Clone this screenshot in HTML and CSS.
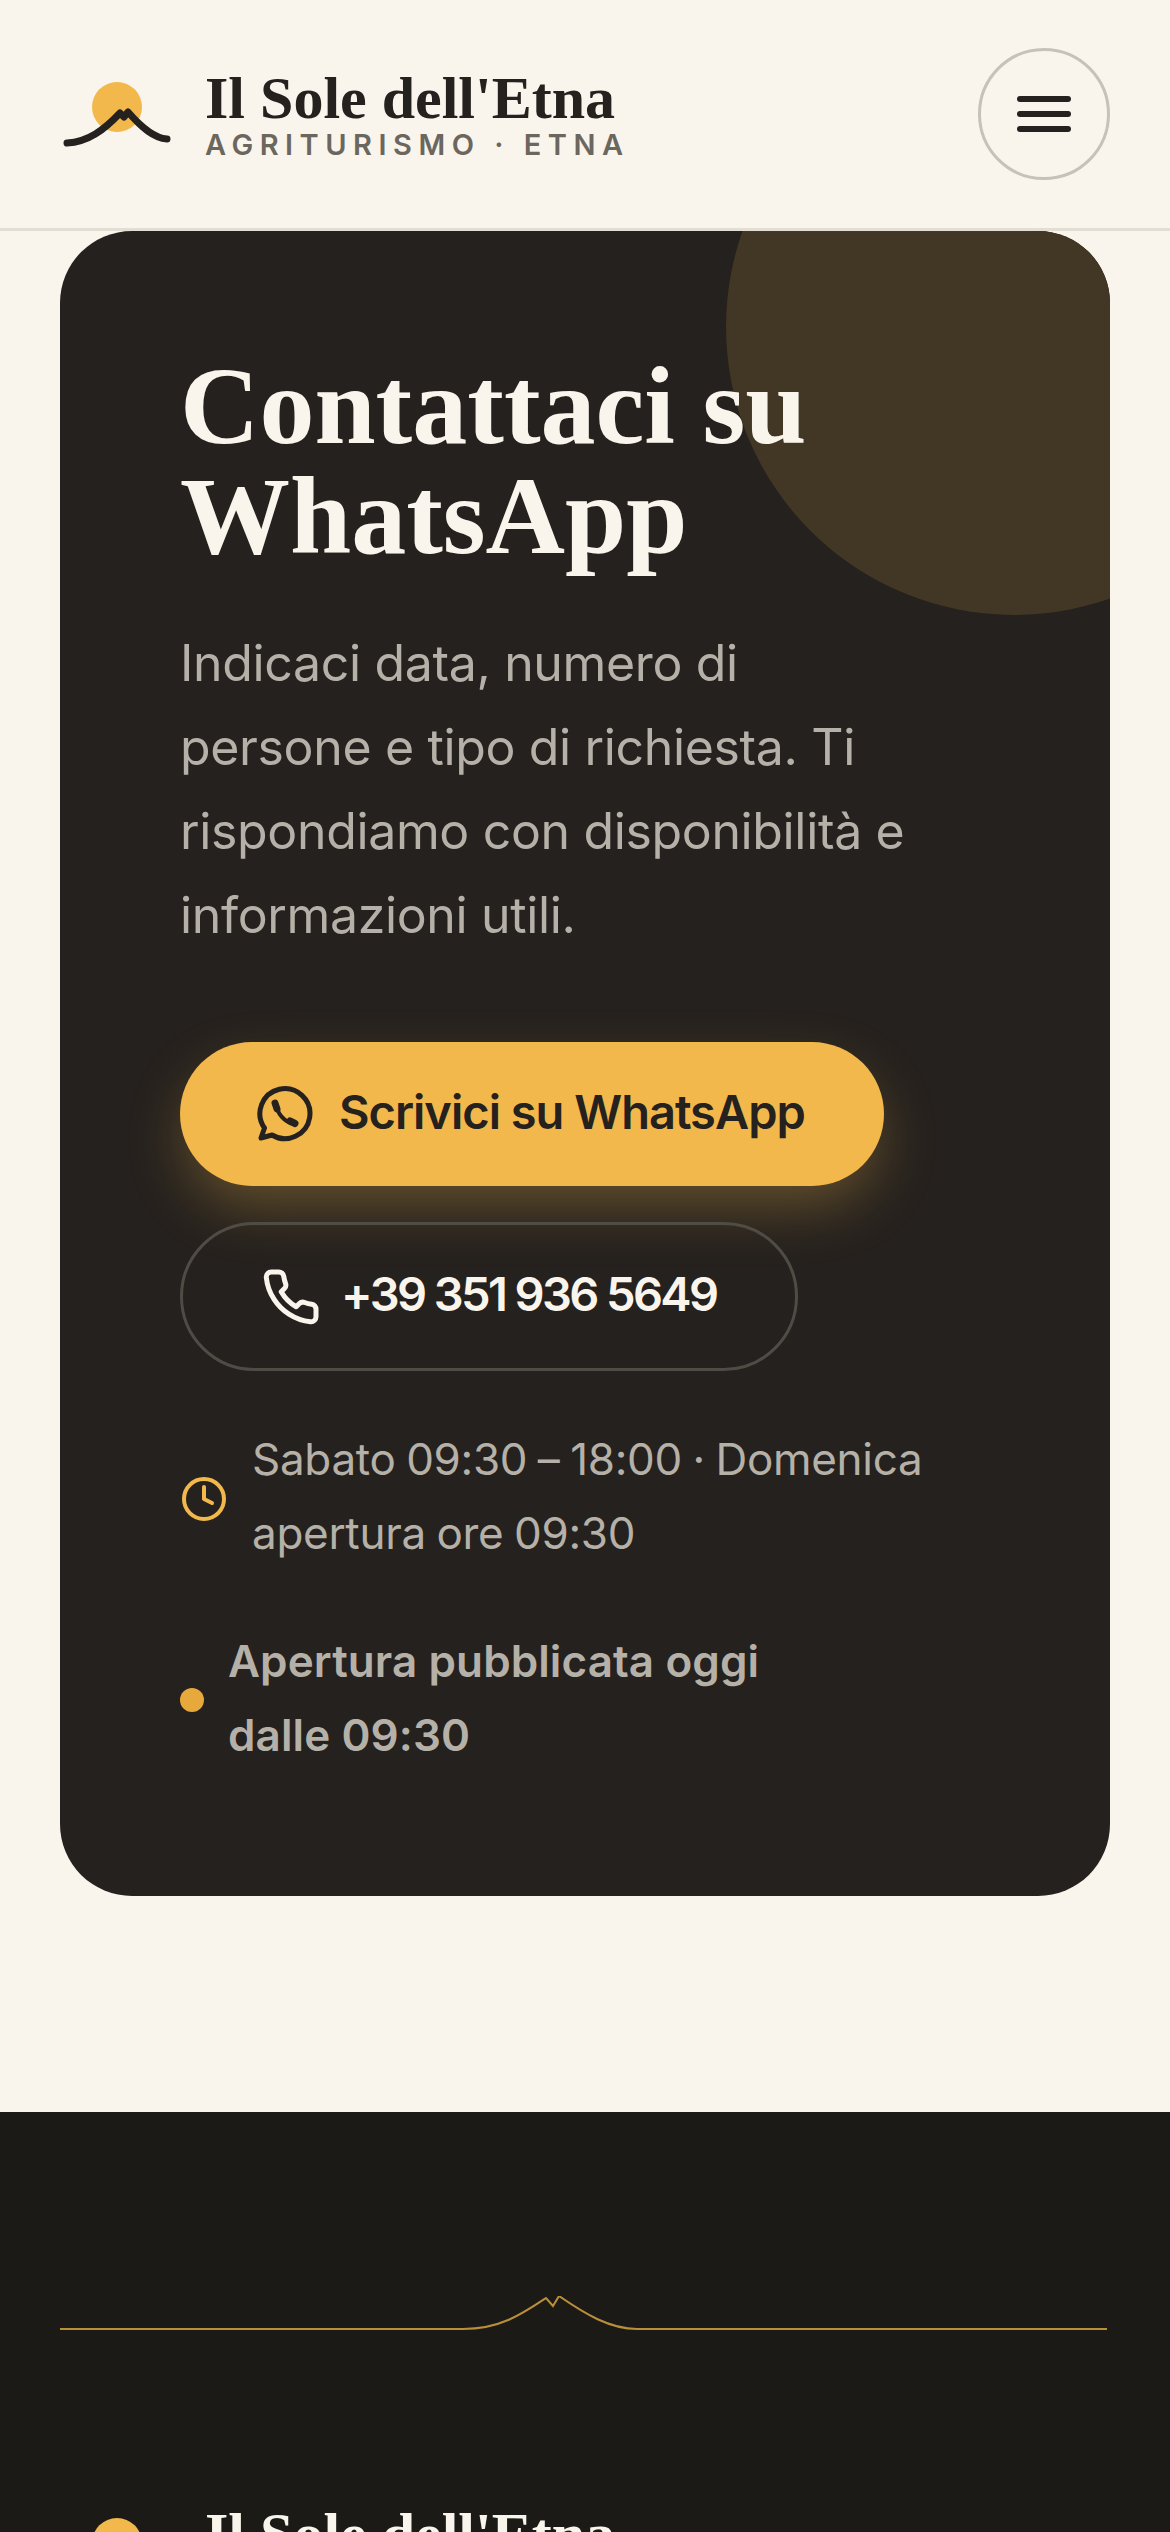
FILE: index.html
```html
<!DOCTYPE html>
<html lang="it">
<head>
<meta charset="utf-8">
<title>Il Sole dell'Etna</title>
<link rel="stylesheet" href="styles.css">
</head>
<body>
<header class="header">
  <a class="brand">
    <svg class="brand-mark" viewBox="0 0 120 72">
      <circle class="sun" cx="57" cy="31" r="25"/>
      <path class="ridge" d="M7 67 C28 66 44 54 60 37 L64 41 L68 36 C82 52 94 62 107 63"/>
    </svg>
    <span class="brand-text">
      <span class="brand-name">Il Sole dell'Etna</span>
      <span class="brand-sub">AGRITURISMO · ETNA</span>
    </span>
  </a>
  <button class="menu" aria-label="Menu"><span></span><span></span><span></span></button>
</header>
<main class="main">
  <section class="card">
    <div class="card-circle"></div>
    <h2 class="card-title">Contattaci su WhatsApp</h2>
    <p class="card-lead">Indicaci data, numero di persone e tipo di richiesta. Ti rispondiamo con disponibilità e informazioni utili.</p>
    <div class="actions">
      <a class="btn btn-primary">
        <svg class="btn-icon" viewBox="0 0 60 60">
          <path class="wa-outline" d="M6 54 L9.500 44 A25 25 0 1 1 17 51 Z"/>
          <path class="wa-phone" d="M21 20 C22 29 29 38 39 40"/>
          <path class="wa-cap" d="M20 19 L22 25 M35 37 L40 39.500"/>
        </svg>
        <span class="btn-label">Scrivici su WhatsApp</span>
      </a>
      <a class="btn btn-ghost">
        <svg class="btn-icon" viewBox="0 0 24 24">
          <path class="line-icon" d="M22 16.920v3a2 2 0 0 1-2.180 2 19.790 19.790 0 0 1-8.630-3.070 19.500 19.500 0 0 1-6-6 19.790 19.790 0 0 1-3.070-8.670A2 2 0 0 1 4.110 2h3a2 2 0 0 1 2 1.720 12.840 12.840 0 0 0 .7 2.810 2 2 0 0 1-.45 2.110L8.090 9.910a16 16 0 0 0 6 6l1.270-1.270a2 2 0 0 1 2.110-.45 12.840 12.840 0 0 0 2.810.7A2 2 0 0 1 22 16.920z"/>
        </svg>
        <span class="btn-label">+39 351 936 5649</span>
      </a>
    </div>
    <div class="info-row">
      <svg class="clock" viewBox="0 0 24 24">
        <circle class="line-icon" cx="12" cy="12" r="10"/>
        <path class="line-icon" d="M12 6v6l4 2"/>
      </svg>
      <span class="info-text">Sabato 09:30 – 18:00 · Domenica apertura ore 09:30</span>
    </div>
    <div class="status-row">
      <span class="dot"></span>
      <span class="status-text">Apertura pubblicata oggi dalle 09:30</span>
    </div>
  </section>
</main>
<footer class="footer">
  <svg class="divider" viewBox="0 0 1047 36">
    <path d="M0 33 H403 C440 33 462 18 486 2 L493 10 L499 0 C525 18 550 33 577 33 H1047"/>
  </svg>
  <a class="brand brand-footer">
    <svg class="brand-mark" viewBox="0 0 120 72">
      <circle class="sun" cx="57" cy="31" r="25"/>
      <path class="ridge" d="M7 67 C28 66 44 54 60 37 L64 41 L68 36 C82 52 94 62 107 63"/>
    </svg>
    <span class="brand-text">
      <span class="brand-name">Il Sole dell'Etna</span>
      <span class="brand-sub">AGRITURISMO · ETNA</span>
    </span>
  </a>
</footer>
</body>
</html>
```
FILE: styles.css
```css
* { box-sizing: border-box; }
html, body { margin: 0; height: 2532px; overflow: hidden; }
body { background: #f9f5ec; font-family: Inter, "Liberation Sans", sans-serif; color: #25211e; }

.header {
  height: 231px;
  padding: 48px 60px 0;
  display: flex;
  justify-content: space-between;
  align-items: flex-start;
  border-bottom: 3px solid #e2ded4;
}
.brand { display: flex; align-items: flex-start; gap: 25px; padding-top: 18px; }
.brand-mark { width: 120px; height: 72px; margin-top: 10px; flex: none; }
.sun { fill: #f2b84b; }
.ridge { fill: none; stroke: #25211e; stroke-width: 7; stroke-linecap: round; stroke-linejoin: round; }
.brand-text { display: flex; flex-direction: column; }
.brand-name {
  font-family: "Liberation Serif", serif;
  font-weight: 700;
  font-size: 60px;
  line-height: 64px;
  color: #25211e;
}
.brand-sub {
  font-size: 29px;
  line-height: 30px;
  font-weight: 600;
  letter-spacing: 6.500px;
  color: #6b675e;
}
.menu {
  width: 132px;
  height: 132px;
  border: 3px solid #c5c2b8;
  border-radius: 50%;
  background: none;
  padding: 0;
  display: flex;
  flex-direction: column;
  align-items: center;
  justify-content: center;
  gap: 9px;
}
.menu span { width: 54px; height: 6px; border-radius: 3px; background: #25211e; }

.main { padding: 0 60px 216px; }
.card {
  position: relative;
  overflow: hidden;
  height: 1665px;
  padding: 120px 120px 0;
  border-radius: 72px;
  background: #25211e;
}
.card-circle {
  position: absolute;
  left: 666px;
  top: -192px;
  width: 576px;
  height: 576px;
  border-radius: 50%;
  background: #423625;
}
.card-title {
  position: relative;
  margin: 0;
  font-family: "Liberation Serif", serif;
  font-weight: 700;
  font-size: 110px;
  line-height: 110px;
  color: #f9f5ec;
}
.card-lead {
  position: relative;
  margin: 50px 0 85px;
  font-size: 50px;
  line-height: 84px;
  font-weight: 400;
  letter-spacing: -.35px;
  color: #b5b1a8;
  max-width: 740px;
}
.actions { display: flex; flex-direction: column; align-items: flex-start; gap: 36px; }
.btn {
  display: inline-flex;
  align-items: center;
  gap: 24px;
  border-radius: 75px;
  font-weight: 600;
  font-size: 47px;
  letter-spacing: -1px;
  white-space: nowrap;
}
.btn-label { margin-bottom: 6px; }
.btn-primary {
  height: 144px;
  padding: 0 79px 0 75px;
  background: #f2b84b;
  color: #25211e;
  box-shadow: 0 24px 60px -6px rgba(242, 184, 75, .32);
}
.btn-ghost {
  height: 149px;
  padding: 0 78px;
  gap: 20px;
  border: 3px solid #4f4b45;
  color: #f9f5ec;
  letter-spacing: -2.600px;
}
.btn-icon { width: 60px; height: 60px; flex: none; }
.wa-outline { fill: none; stroke: #25211e; stroke-width: 5; stroke-linejoin: round; }
.wa-phone { fill: none; stroke: #25211e; stroke-width: 4; }
.wa-cap { fill: none; stroke: #25211e; stroke-width: 7; stroke-linecap: round; }
.line-icon { fill: none; stroke: currentColor; stroke-width: 2; stroke-linecap: round; stroke-linejoin: round; }
.info-row {
  display: flex;
  align-items: center;
  gap: 24px;
  margin-top: 51px;
  font-size: 44px;
  line-height: 74px;
  letter-spacing: -.3px;
  word-spacing: -1.500px;
  color: #b5b1a8;
  max-width: 760px;
}
.clock { width: 48px; height: 48px; flex: none; margin-top: 6px; color: #f2b84b; }
.status-row {
  display: flex;
  align-items: center;
  gap: 24px;
  margin-top: 54px;
  font-size: 44px;
  line-height: 74px;
  font-weight: 600;
  letter-spacing: .1px;
  color: #b5b1a8;
  max-width: 620px;
}
.dot { width: 24px; height: 24px; flex: none; margin-top: 4px; border-radius: 50%; background: #e8a93c; }

.footer { height: 500px; padding: 184px 60px 0; background: #1c1a16; }
.divider { display: block; width: 1047px; height: 36px; }
.divider path { fill: none; stroke: #b98f3a; stroke-width: 2; }
.brand-footer { margin-top: 152px; }
.brand-footer .brand-name { color: #f9f5ec; }
.brand-footer .brand-sub { color: #b5b1a8; }
.brand-footer .ridge { stroke: #f9f5ec; }
```
